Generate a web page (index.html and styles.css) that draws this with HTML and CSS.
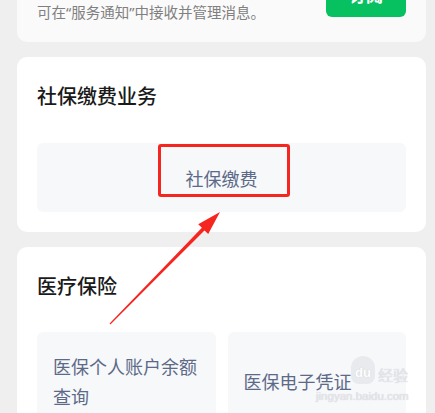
FILE: index.html
```html
<!DOCTYPE html>
<html lang="zh-CN">
<head>
    <meta charset="UTF-8">
    <meta name="viewport" content="width=device-width, initial-scale=1.0">
    <title>社保服务</title>
    <link rel="stylesheet" href="styles.css">
</head>
<body>

    <div class="page">
        <!-- subscribe card, scrolled mostly out of view -->
        <div class="card notice-card">
            <div class="notice-row">
                <p class="notice-text">可在“服务通知”中接收并管理消息。</p>
                <button class="subscribe-button">订阅</button>
            </div>
        </div>

        <div class="card">
            <h2 class="card-title">社保缴费业务</h2>
            <div class="tile-grid single">
                <div class="tile center">社保缴费</div>
            </div>
            <div class="mark-box"></div>
        </div>

        <div class="card">
            <h2 class="card-title">医疗保险</h2>
            <div class="tile-grid">
                <div class="tile">医保个人账户余额<br>查询</div>
                <div class="tile">医保电子凭证</div>
            </div>
        </div>
    </div>

    <svg class="arrow" width="435" height="413" viewBox="0 0 435 413">
        <polygon fill="#f5261f" points="109.6,323.6 201.9,227.8 198.2,224.2 220,212 208.2,234 204.5,230.4 110.4,324.4"/>
    </svg>

    <div class="watermark">
        <div class="wm-top"><span class="wm-paw">du</span><span class="wm-word">经验</span></div>
        <div class="wm-url">jingyan.baidu.com</div>
    </div>

</body>
</html>
```

FILE: styles.css
```css
body {
    margin: 0;
    background-color: #efefef;
    font-family: "Noto Sans CJK SC", "Noto Sans", sans-serif;
    overflow: hidden;
    height: 413px;
}

.page {
    width: 409px;
    padding-left: 17px;
    margin-top: -49px;
    display: flex;
    flex-direction: column;
    gap: 15px;
}

.card {
    position: relative;
    background-color: #fff;
    border-radius: 10px;
    padding: 25px 20px 20px;
}

.notice-card {
    background-color: #fafafa;
    padding: 20px 20px 19px;
}

.notice-row {
    display: flex;
    justify-content: space-between;
    align-items: flex-start;
}

.notice-text {
    margin: 30px 0 0;
    font-family: "Noto Sans", "Noto Sans CJK SC", sans-serif;
    font-size: 14.5px;
    line-height: 22px;
    color: #808080;
}

.subscribe-button {
    width: 80px;
    height: 46px;
    border: none;
    border-radius: 6px;
    background-color: #07c160;
    color: #fff;
    font-family: inherit;
    font-size: 17px;
    font-weight: bold;
}

.card-title {
    margin: 0;
    font-size: 20px;
    line-height: 28px;
    font-weight: 500;
    color: #1a1a1a;
}

.tile-grid {
    margin-top: 32px;
    display: grid;
    grid-template-columns: 1fr 1fr;
    gap: 12px;
}

.tile-grid.single {
    margin-top: 33px;
    grid-template-columns: 1fr;
}

.tile {
    display: flex;
    align-items: center;
    min-height: 60px;
    padding: 19px 16px;
    background-color: #f7f8fa;
    border-radius: 6px;
    font-size: 18px;
    line-height: 30px;
    color: #5c6a88;
}

.tile.center {
    justify-content: center;
    min-height: 0;
    height: 31px;
}

.mark-box {
    position: absolute;
    left: 141px;
    top: 87px;
    width: 126px;
    height: 47px;
    border: 3px solid #f5261f;
    border-radius: 3px;
}

.arrow {
    position: absolute;
    top: 0;
    left: 0;
}

.watermark {
    position: absolute;
    left: 316px;
    top: 356px;
    width: 92px;
    color: #e6e7ea;
    text-shadow: 0 0 1px #c4c7cf;
}

.wm-top {
    display: flex;
    justify-content: flex-end;
    align-items: flex-end;
    gap: 3px;
}

.wm-paw {
    width: 24px;
    height: 28px;
    border-radius: 12px 12px 8px 8px;
    background-color: rgba(215, 217, 222, 0.45);
    color: #fff;
    font-family: "Liberation Sans", sans-serif;
    font-size: 13px;
    font-weight: bold;
    line-height: 34px;
    text-align: center;
}

.wm-word {
    font-size: 15px;
    line-height: 18px;
}

.wm-url {
    margin-top: 7px;
    font-family: "Liberation Sans", sans-serif;
    font-size: 11.5px;
    line-height: 10px;
    text-align: right;
}
```
